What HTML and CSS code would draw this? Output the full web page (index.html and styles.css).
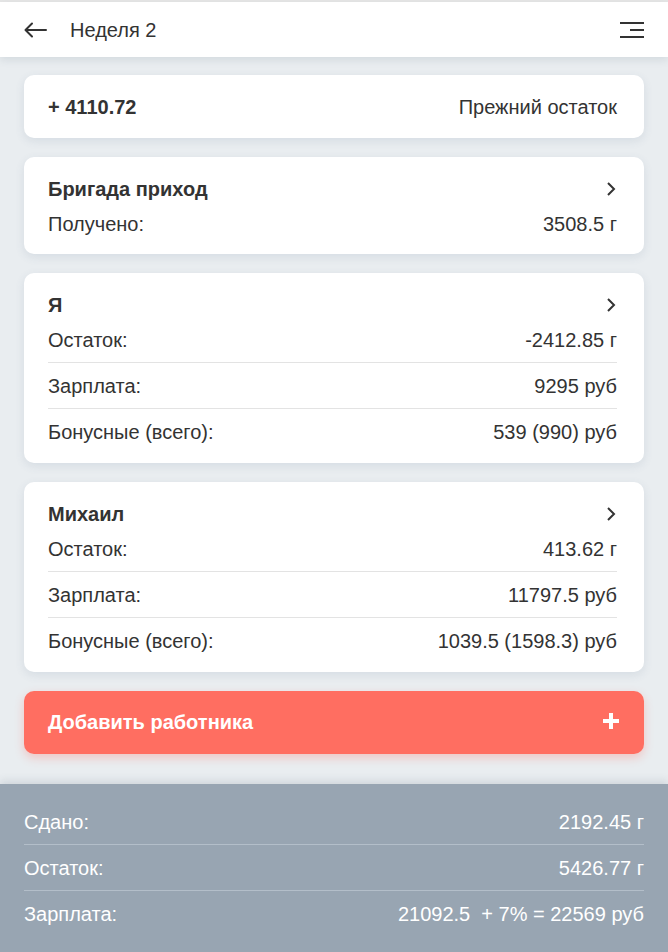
FILE: index.html
```html
<!DOCTYPE html>
<html lang="ru">
<head>
<meta charset="utf-8">
<title>Неделя 2</title>
<link rel="stylesheet" href="styles.css">
</head>
<body>
<div class="app">
  <header class="topbar">
    <div class="topbar-left">
      <svg class="icon-back" width="23" height="16" viewBox="0 0 23 16" fill="none" stroke="#333" stroke-width="2" stroke-linecap="round" stroke-linejoin="round">
        <path d="M22 8H2"/>
        <path d="M8 1.5L1.5 8L8 14.5"/>
      </svg>
      <span class="topbar-title">Неделя 2</span>
    </div>
    <svg class="icon-menu" width="24" height="18" viewBox="0 0 24 18" fill="none" stroke="#333" stroke-width="2">
      <path d="M0 2H24"/>
      <path d="M10 9H24"/>
      <path d="M0 16H24"/>
    </svg>
  </header>

  <main class="content">
    <section class="card card-simple">
      <span class="strong">+ 4110.72</span>
      <span>Прежний остаток</span>
    </section>

    <section class="card card-short">
      <div class="card-head">
        <span class="strong">Бригада приход</span>
        <svg class="chevron" width="10" height="16" viewBox="0 0 10 16" fill="none" stroke="#333" stroke-width="2"><path d="M2 2L8 8L2 14"/></svg>
      </div>
      <div class="row"><span>Получено:</span><span>3508.5 г</span></div>
    </section>

    <section class="card">
      <div class="card-head">
        <span class="strong">Я</span>
        <svg class="chevron" width="10" height="16" viewBox="0 0 10 16" fill="none" stroke="#333" stroke-width="2"><path d="M2 2L8 8L2 14"/></svg>
      </div>
      <div class="row"><span>Остаток:</span><span>-2412.85 г</span></div>
      <div class="row"><span>Зарплата:</span><span>9295 руб</span></div>
      <div class="row"><span>Бонусные (всего):</span><span>539 (990) руб</span></div>
    </section>

    <section class="card">
      <div class="card-head">
        <span class="strong">Михаил</span>
        <svg class="chevron" width="10" height="16" viewBox="0 0 10 16" fill="none" stroke="#333" stroke-width="2"><path d="M2 2L8 8L2 14"/></svg>
      </div>
      <div class="row"><span>Остаток:</span><span>413.62 г</span></div>
      <div class="row"><span>Зарплата:</span><span>11797.5 руб</span></div>
      <div class="row"><span>Бонусные (всего):</span><span>1039.5 (1598.3) руб</span></div>
    </section>

    <button class="add-btn" type="button">
      <span>Добавить работника</span>
      <svg width="16" height="16" viewBox="0 0 16 16" fill="none" stroke="#fff" stroke-width="4"><path d="M8 0V16"/><path d="M0 8H16"/></svg>
    </button>
  </main>

  <footer class="summary">
    <div class="row"><span>Сдано:</span><span>2192.45 г</span></div>
    <div class="row"><span>Остаток:</span><span>5426.77 г</span></div>
    <div class="row"><span>Зарплата:</span><span>21092.5&nbsp; + 7% = 22569 руб</span></div>
  </footer>
</div>
</body>
</html>
```

FILE: styles.css
```css
* { box-sizing: border-box; }

html, body {
  margin: 0;
  padding: 0;
}

body {
  background: #e9edf0;
  font-family: "Liberation Sans", Arial, sans-serif;
  font-size: 20px;
  line-height: 24px;
  color: #333;
}

.app {
  display: flex;
  flex-direction: column;
  min-height: 952px;
  border-top: 2px solid #e6e6e6;
}

.topbar {
  height: 55px;
  background: #fff;
  display: flex;
  align-items: center;
  justify-content: space-between;
  padding: 0 24px;
  box-shadow: 0 3px 8px rgba(60, 80, 100, 0.12);
  position: relative;
  z-index: 2;
}

.topbar-left {
  display: flex;
  align-items: center;
  gap: 23px;
}

.icon-back { display: block; margin-top: 1px; }

.topbar-title {
  font-size: 20px;
  color: #333;
}

.icon-menu { display: block; margin-top: 1px; }

.content {
  display: flex;
  flex-direction: column;
  gap: 19px;
  padding: 18px 24px 30px;
}

.card {
  background: #fff;
  border-radius: 10px;
  padding: 20px 27px 9px 24px;
  box-shadow: 0 3px 10px rgba(70, 100, 130, 0.12);
}

.card-short { padding-bottom: 8px; }

.card-simple {
  display: flex;
  justify-content: space-between;
  padding: 20px 27px 19px 24px;
}

.strong { font-weight: bold; }

.card-head {
  display: flex;
  justify-content: space-between;
  align-items: center;
  height: 24px;
}

.chevron { display: block; margin-right: 1px; }

.row {
  display: flex;
  justify-content: space-between;
  padding: 11px 0 10px;
  border-bottom: 1px solid #e3e3e3;
}

.row:last-child { border-bottom: none; }

.add-btn {
  display: flex;
  align-items: center;
  justify-content: space-between;
  height: 63px;
  border: none;
  border-radius: 10px;
  background: #ff6e61;
  color: #fff;
  font-family: inherit;
  font-size: 20px;
  font-weight: bold;
  padding: 0 25px 0 24px;
  box-shadow: 0 4px 10px rgba(255, 110, 97, 0.3);
  text-align: left;
}

.add-btn svg { display: block; margin-top: -3px; }

.summary {
  margin-top: auto;
  background: #98a5b2;
  color: #fff;
  padding: 15px 24px 16px;
  box-shadow: 0 -3px 8px rgba(60, 80, 100, 0.15);
}

.summary .row {
  border-bottom-color: #b3bec9;
}
```
